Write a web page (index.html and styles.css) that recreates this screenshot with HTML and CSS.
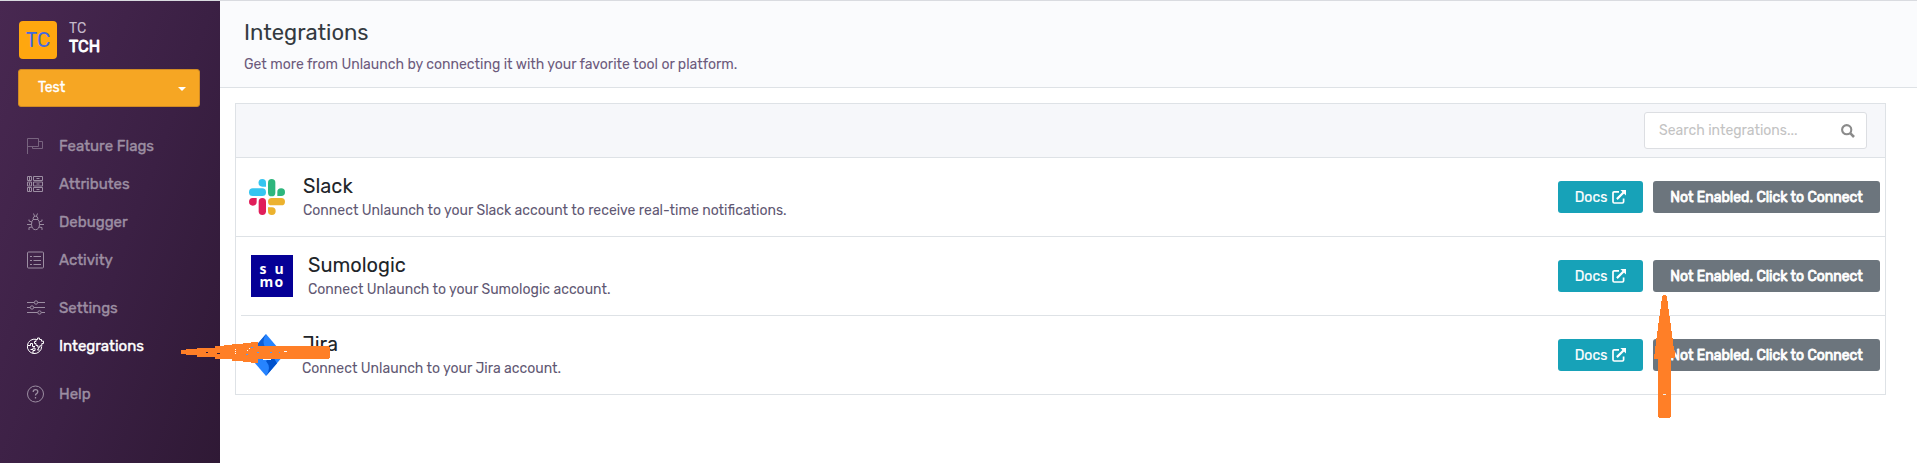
FILE: index.html
```html
<!DOCTYPE html>
<html lang="en">
<head>
<meta charset="utf-8">
<title>Integrations</title>
<link rel="stylesheet" href="styles.css">
</head>
<body>
<svg class="defs" aria-hidden="true">
  <symbol id="external" viewBox="0 0 14 14">
    <path d="M7 1.900H2.200Q1 1.900 1 3.100V11.800Q1 13 2.200 13H10.400Q11.600 13 11.600 11.800V8.400" fill="none" stroke="#fff" stroke-width="1.700"/>
    <path d="M4.900 9.100L11.500 2.500" stroke="#fff" stroke-width="2.200"/>
    <path d="M8.400 0H14V5.600Z" fill="#fff"/>
  </symbol>
</svg>
<div class="app">
  <aside class="sidebar">
    <div class="account">
      <div class="avatar">TC</div>
      <div class="names"><span class="org">TC</span><span class="project">TCH</span></div>
    </div>
    <div class="env"><span>Test</span><i class="caret"></i></div>
    <nav class="nav">
      <a class="item"><svg class="icon dim" viewBox="0 0 18 18"><path d="M.5 17V1.500H11.500V9.500H.5" /><path d="M11.500 4.500H15.500V11.500H5.500V9.500"/></svg><span>Feature Flags</span></a>
      <a class="item"><svg class="icon" viewBox="0 0 18 18"><path d="M.5 1.500H4.500V5.500H.5ZM6.500 1.500H15.500V5.500H6.500ZM.5 7H4.500V11H.5ZM6.500 7H15.500V11H6.500ZM.5 12.500H4.500V16.500H.5ZM6.500 12.500H15.500V16.500H6.500ZM9.500 3.500H12.500M9.500 9H12.500M9.500 14.500H12.500M2.500 2V5M2.500 7.500V10.500M2.500 13V16"/></svg><span>Attributes</span></a>
      <a class="item"><svg class="icon" viewBox="0 0 18 18"><path d="M6 6.500H11Q12.500 8 12.500 11.500Q12 16.700 8.500 16.700Q5 16.700 4.500 11.500Q4.500 8 6 6.500ZM6 6Q6 3.200 8.500 3.200Q11 3.200 11 6M6.500 .5L7.500 3M10.500 .5L9.500 3M4.800 9L2 8V6.500M12.200 9L15 8V6.500M4.500 11.500H0M12.500 11.500H17M5 14L2 14.500V17M12 14L15 14.500V17"/></svg><span>Debugger</span></a>
      <a class="item"><svg class="icon" viewBox="0 0 18 18"><rect x=".5" y="1" width="16" height="16" rx="1"/><path d="M3 5.500H5M6.500 5.500H14M3 9.500H5M6.500 9.500H14M3 13.500H5M6.500 13.500H14"/></svg><span>Activity</span></a>
      <a class="item gap"><svg class="icon" viewBox="0 0 18 18"><path d="M0 3.500H7.200M10.800 3.500H18M0 8.500H3.200M6.800 8.500H18M0 13.500H10.700M14.300 13.500H18"/><circle cx="9" cy="3.500" r="1.700"/><circle cx="5" cy="8.500" r="1.700"/><circle cx="12.500" cy="13.500" r="1.700"/></svg><span>Settings</span></a>
      <a class="item active"><svg class="icon" viewBox="0 0 18 18"><path d="M9 2.300A7.200 7.200 0 1 0 14.700 9.500M9 2.500H10.500V1H12.500V2.500H14.500V4.200H16.500V6.500H14.800V8.800H12.800V10.200H10.800V8.500H9V6.500H7.500V4.500H9ZM.8 8.500H3.500V6.500H5.500V9.500H8M3.500 12.500H6V11H8V13.500H6V16.500M12 10.500L10.500 13H12.500"/></svg><span>Integrations</span></a>
      <a class="item gap"><svg class="icon" viewBox="0 0 18 18"><circle cx="8.500" cy="9" r="8"/><path d="M6.200 7Q6.200 4.700 8.500 4.700Q10.800 4.700 10.800 6.800Q10.800 8.100 9.300 8.800Q8.500 9.200 8.500 10.500M8.500 12V13.400" stroke-width="1.300"/></svg><span>Help</span></a>
    </nav>
  </aside>
  <main class="main">
    <header class="page-head">
      <h1>Integrations</h1>
      <p>Get more from Unlaunch by connecting it with your favorite tool or platform.</p>
    </header>
    <section class="panel">
      <div class="toolbar">
        <div class="search"><span>Search integrations...</span>
          <svg viewBox="0 0 14 14"><circle cx="5.700" cy="5.700" r="4.600" fill="none" stroke="#8b8b8b" stroke-width="2.100"/><path d="M9.200 9.200L13 13" stroke="#8b8b8b" stroke-width="2.600"/></svg>
        </div>
      </div>
      <div class="row slack">
        <svg class="logo" viewBox="72 72 108 108">
          <g fill="#36c5f0"><path d="M112 72a11 11 0 0 1 11 11V95H112a11 11 0 0 1 0-23Z"/><rect x="72" y="100" width="51" height="23" rx="11.500"/></g>
          <g fill="#2eb67d"><rect x="129" y="72" width="22" height="52" rx="11"/><path d="M157 123V112a11.500 11.500 0 1 1 11.500 11Z"/></g>
          <g fill="#e01e5a"><path d="M95 129V140.500A11.500 11.500 0 1 1 83.500 129Z"/><rect x="101" y="129" width="22" height="51" rx="11"/></g>
          <g fill="#ecb22e"><rect x="129" y="129" width="51" height="22" rx="11"/><path d="M129 157H140a11.500 11.500 0 1 1-11 11.500Z"/></g>
        </svg>
        <div class="info"><h2>Slack</h2><p>Connect Unlaunch to your Slack account to receive real-time notifications.</p></div>
        <a class="btn docs"><span>Docs</span><svg><use href="#external"/></svg></a><a class="btn connect"><span>Not Enabled. Click to Connect</span></a>
      </div>
      <div class="row sumo">
        <div class="logo"><span>s</span><span>u</span><span>m</span><span>o</span></div>
        <div class="info"><h2>Sumologic</h2><p>Connect Unlaunch to your Sumologic account.</p></div>
        <a class="btn docs"><span>Docs</span><svg><use href="#external"/></svg></a><a class="btn connect"><span>Not Enabled. Click to Connect</span></a>
      </div>
      <div class="row jira">
        <svg class="logo" viewBox="0 0 36 42"><path d="M18 0L36 21L18 42L0 21Z" fill="#2684ff"/><path d="M18 0Q13 8 18 15L12 21L8 11.700Z" fill="#0f5fd6"/><path d="M18 42Q24 34 18 27L24 21L29 29.200Z" fill="#0052cc"/></svg>
        <div class="info"><h2>Jira</h2><p>Connect Unlaunch to your Jira account.</p></div>
        <a class="btn docs"><span>Docs</span><svg><use href="#external"/></svg></a><a class="btn connect"><span>Not Enabled. Click to Connect</span></a>
      </div>
    </section>
  </main>
</div>
<svg class="arrow arrow-left" viewBox="0 0 149 22" shape-rendering="crispEdges"><path d="M0 9H5V8H16V7H34V5H43V4H51V3H62V2H70V1H77V5H148V6H149V17H148V18H77V22H70V21H62V20H51V18H34V16H16V14H5V13H0Z" fill="#ff7f27"/><path d="M25 11H27V12H25ZM36 12H39V13H36Z" fill="#2f1a38"/><path d="M54 8H55V9H54ZM54 10H55V11H54ZM54 12H55V13H54ZM66 9H67V10H66ZM68 7H69V8H68ZM103 10H106V11H103ZM82 18H90V19H82Z" fill="#fff"/><path d="M70 6H72V7H70ZM65 13H67V14H65ZM76 11H78V12H76ZM89 11H91V12H89ZM98 11H99V12H98Z" fill="#4b9bff"/></svg>
<svg class="arrow arrow-up" viewBox="0 0 21 123" shape-rendering="crispEdges"><path d="M8 1H9V0H12V1H13V6H14V14H15V21H16V28H17V36H18V43H19V51H20V56H21V63H17V122H16V123H5V122H4V64H0V59H1V51H2V43H3V36H4V28H5V21H6V14H7V6H8Z" fill="#ff7f27"/><path d="M9 99H12V100H9Z" fill="#eee"/></svg>
</body>
</html>
```
FILE: styles.css
```css
* { box-sizing: border-box; }
body { margin: 0; font-family: Rubik, Roboto, sans-serif; font-size: 14px; color: #212529; background: #fff; overflow: hidden; }
h1, h2, p { margin: 0; font-weight: 400; white-space: nowrap; }
span { white-space: nowrap; }
.defs { display: none; }
.app { display: flex; height: 463px; border-top: 1px solid #d9dbe0; }
.sidebar { width: 220px; flex: none; padding: 20px 18px 0; background: linear-gradient(110deg, #482851 0%, #3b2044 55%, #2f1935 100%); }
.account { display: flex; gap: 12px; padding-left: 1px; height: 48px; }
.avatar { width: 38px; height: 38px; border-radius: 4px; background: #ffa70f; color: #4169e1; font-size: 20px; line-height: 38px; text-align: center; }
.names { display: flex; flex-direction: column; padding-top: 1px; }
.org { font-size: 14px; line-height: 14px; color: #c5b8c9; }
.project { font-size: 16px; line-height: 21px; color: #fff; -webkit-text-stroke: .8px #fff; }
.env { display: flex; align-items: center; justify-content: space-between; width: 182px; height: 38px; padding: 0 13px 2px 19px; border: 1px solid #d08a24; border-radius: 3px; background: #f6a623; color: #fff; -webkit-text-stroke: .35px #fff; }
.caret { margin-top: 3px; border: 4px solid transparent; border-top-color: #fff; border-bottom: 0; }
.nav { padding: 20px 0 0 9px; }
.item { display: flex; align-items: center; gap: 14px; height: 38px; color: #9c8ea2; font-size: 15px; -webkit-text-stroke: .4px currentColor; }
.item.gap { margin-top: 10px; }
.item.active { color: #fff; }
.icon { width: 18px; height: 18px; fill: none; stroke: currentColor; stroke-width: 1; }
.icon.dim { opacity: .6; }
.main { flex: 1; min-width: 0; }
.page-head { height: 87px; padding: 19px 24px 0; background: #fafbfd; border-bottom: 1px solid #dee2e6; }
h1 { font-size: 22px; line-height: 26px; color: #343a40; }
.page-head p { margin-top: 10px; line-height: 17px; color: #6c5a7c; }
.panel { margin: 15px 31px 0 15px; border: 1px solid #dee2e6; }
.toolbar { display: flex; justify-content: flex-end; height: 53px; padding: 8px 18px 0 0; background: #f6f7fa; }
.search { display: flex; align-items: center; justify-content: space-between; width: 223px; height: 37px; padding: 0 11px 0 14px; border: 1px solid #dcdee2; border-radius: 3px; background: #fff; color: #c3c3c3; }
.search svg { width: 14px; height: 14px; }
.row { display: flex; align-items: center; height: 79px; padding-right: 5px; border-top: 1px solid #dee2e6; }
.row .logo { flex: none; }
.slack .logo { width: 36px; height: 36px; margin: 0 18px 0 13px; }
.sumo .logo { display: grid; grid-template-columns: 15px 10px; grid-auto-rows: 13px; justify-content: center; align-content: center; width: 42px; height: 42px; margin: 0 15px; padding-bottom: 3px; background: #050096; color: #fff; font: 700 15px/13px "Open Sans", sans-serif; }
.sumo .logo span { font-size: 14px; }
.jira { margin-left: 5px; }
.jira .logo { width: 36px; height: 42px; margin: 0 18px 0 7px; }
.info { flex: 1; padding-bottom: 1px; }
h2 { font-size: 20px; line-height: 24px; }
.info p { margin-top: 4px; line-height: 18px; color: #5f5873; }
.btn { display: flex; align-items: center; justify-content: center; height: 32px; border-radius: 3px; color: #fff; }
.docs { width: 85px; gap: 5px; background: #17a2b8; -webkit-text-stroke: .2px #fff; }
.docs svg { width: 14px; height: 14px; }
.connect { width: 227px; margin-left: 10px; background: #6c757d; -webkit-text-stroke: .8px #fff; }
.arrow { position: absolute; }
.arrow-left { left: 181px; top: 341px; width: 149px; height: 22px; }
.arrow-up { left: 1654px; top: 295px; width: 21px; height: 123px; }
```
